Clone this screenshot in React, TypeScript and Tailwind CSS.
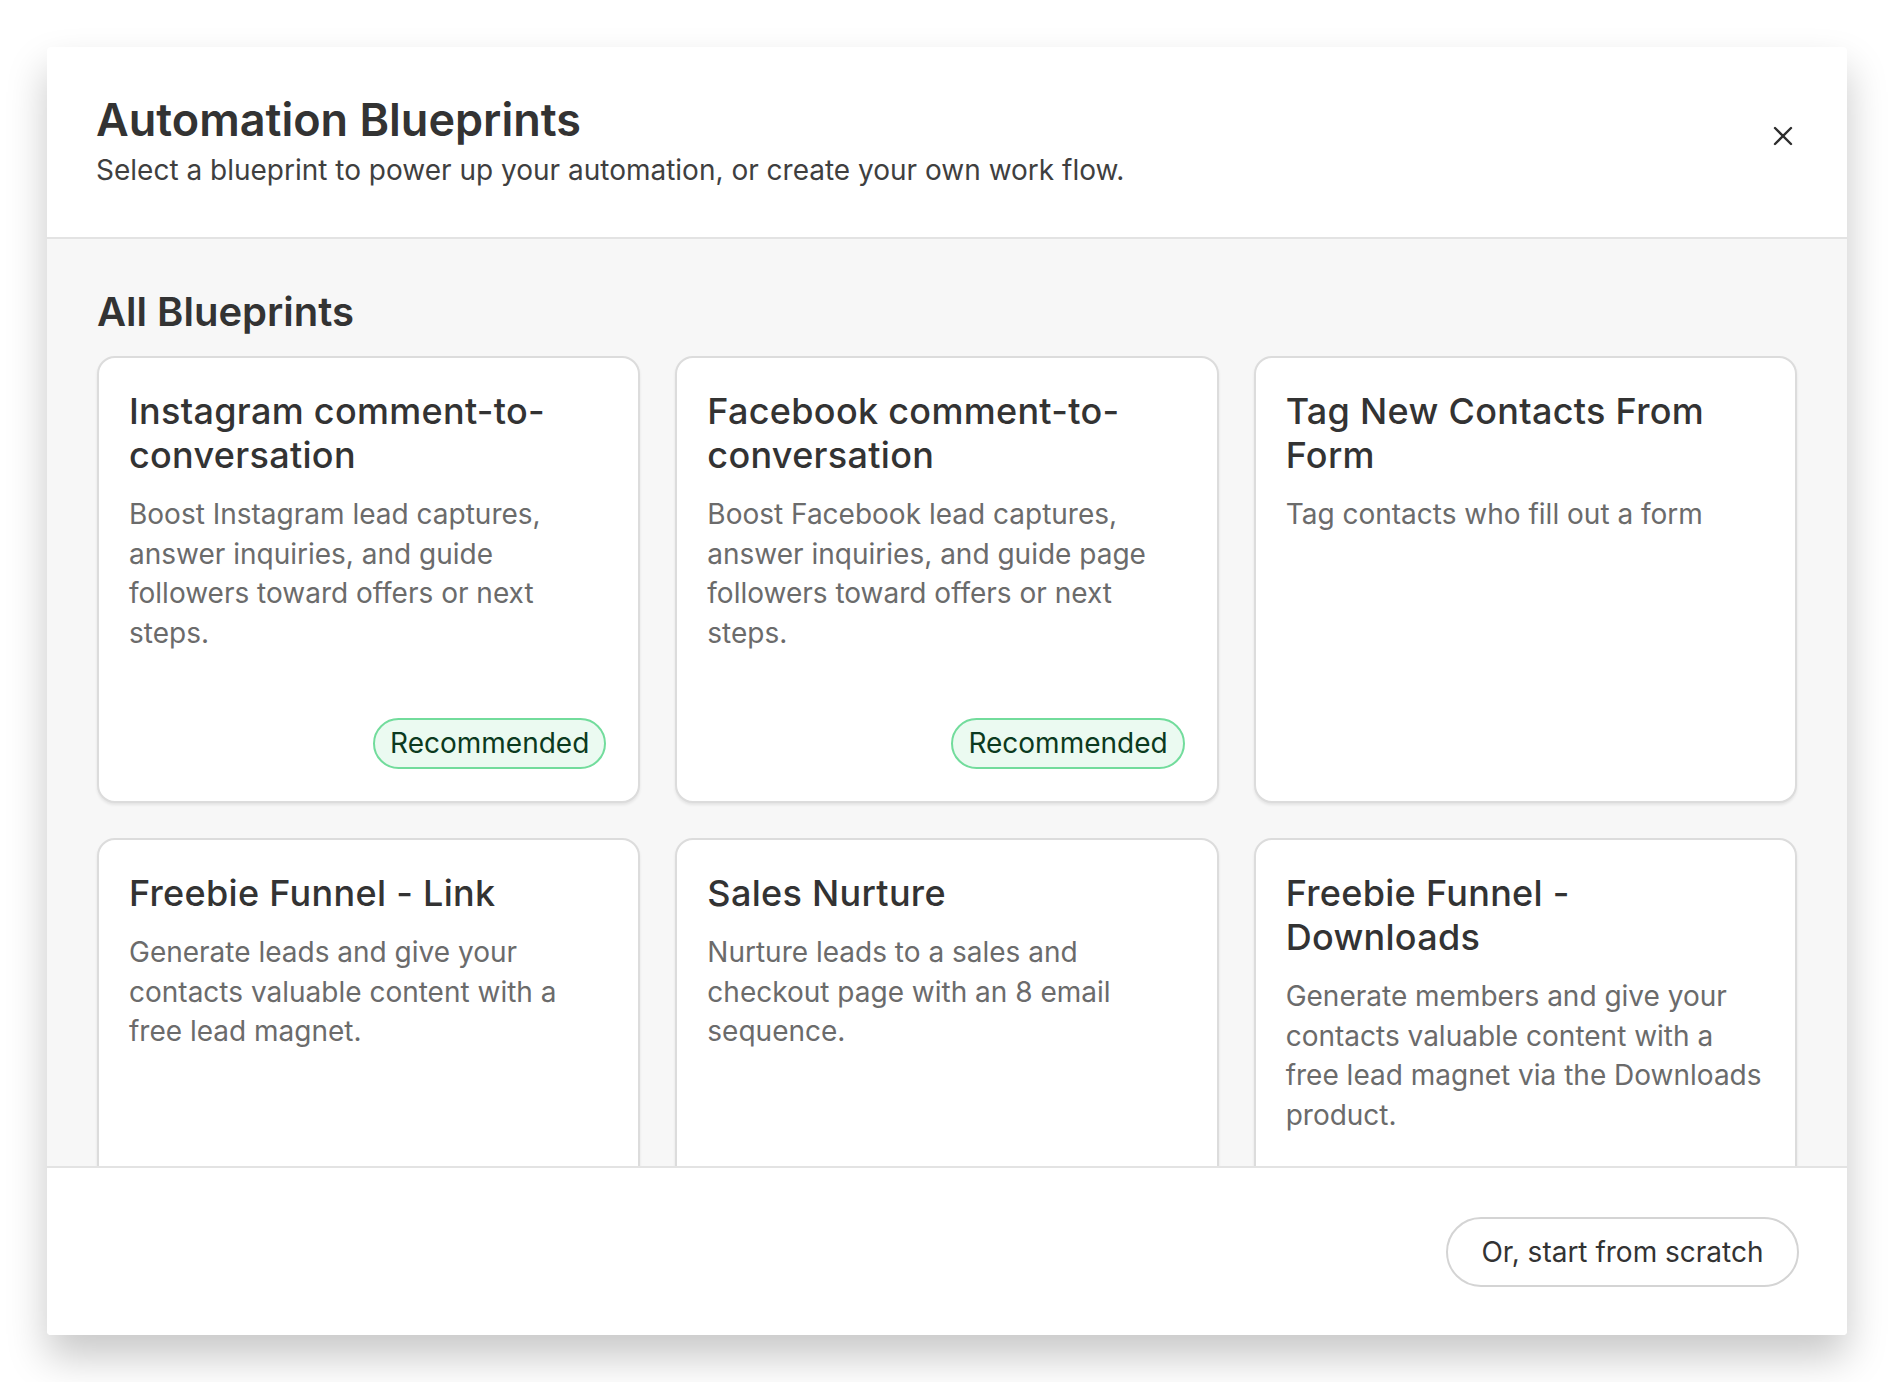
import React from "react";

type Blueprint = {
  title: string;
  description: string;
  recommended?: boolean;
};

const blueprints: Blueprint[] = [
  {
    title: "Instagram comment-to-conversation",
    description:
      "Boost Instagram lead captures, answer inquiries, and guide followers toward offers or next steps.",
    recommended: true,
  },
  {
    title: "Facebook comment-to-conversation",
    description:
      "Boost Facebook lead captures, answer inquiries, and guide page followers toward offers or next steps.",
    recommended: true,
  },
  {
    title: "Tag New Contacts From Form",
    description: "Tag contacts who fill out a form",
  },
  {
    title: "Freebie Funnel - Link",
    description:
      "Generate leads and give your contacts valuable content with a free lead magnet.",
  },
  {
    title: "Sales Nurture",
    description:
      "Nurture leads to a sales and checkout page with an 8 email sequence.",
  },
  {
    title: "Freebie Funnel - Downloads",
    description:
      "Generate members and give your contacts valuable content with a free lead magnet via the Downloads product.",
  },
];

function BlueprintCard({ title, description, recommended }: Blueprint) {
  return (
    <div className="flex h-[447px] flex-col rounded-[18px] border-2 border-[#dcdcdc] bg-white pt-[31px] pr-[24px] pb-[32px] pl-[30px] shadow-[0_2px_3px_rgba(0,0,0,0.08)]">
      <h3 className="text-[36px] font-medium leading-[44px] tracking-[0.3px] text-[#333333]">
        {title}
      </h3>
      <p className="mt-[18px] text-[28px] leading-[39.5px] text-[#6b6b6b]">
        {description}
      </p>
      {recommended && (
        <span className="mt-auto mr-[8px] self-end rounded-full border-2 border-[#72dc9c] bg-[#ebfaf1] px-[15px] py-[4px] text-[28px] leading-[39px] text-[#0b3a20]">
          Recommended
        </span>
      )}
    </div>
  );
}

export default function App() {
  return (
    <div className="min-h-screen bg-white p-[47px] font-['Inter',sans-serif]">
      <div className="flex h-[1288px] w-[1800px] flex-col overflow-hidden rounded-[4px] bg-white shadow-[0_22px_40px_rgba(0,0,0,0.22)]">
        {/* header */}
        <div className="flex h-[192px] shrink-0 items-start justify-between border-b-2 border-[#e3e3e3] pt-[48px] pr-[52px] pl-[49px]">
          <div>
            <h1 className="text-[45px] font-semibold leading-[50px] text-[#333333]">
              Automation Blueprints
            </h1>
            <p className="mt-[7px] text-[28px] leading-[36px] text-[#3f3f3f]">
              Select a blueprint to power up your automation, or create your own work flow.
            </p>
          </div>
          <button className="mt-[29px] text-[#2e2e2e]">
            <svg width="24" height="24" viewBox="0 0 24 24" fill="none" stroke="currentColor" strokeWidth="2.4" strokeLinecap="round">
              <path d="M4 4L20 20M20 4L4 20" />
            </svg>
          </button>
        </div>

        {/* body */}
        <div className="flex-1 overflow-hidden bg-[#f7f7f7] px-[50px] pt-[50px]">
          <h2 className="mb-[21px] text-[40px] font-semibold leading-[46px] text-[#333333]">
            All Blueprints
          </h2>
          <div className="grid grid-cols-3 gap-[35px]">
            {blueprints.map((b) => (
              <BlueprintCard key={b.title} {...b} />
            ))}
          </div>
        </div>

        {/* footer */}
        <div className="flex h-[169px] shrink-0 items-center justify-end border-t-2 border-[#e3e3e3] bg-white pr-[48px]">
          <button className="h-[70px] w-[353px] rounded-full border-2 border-[#d4d4d4] text-[28px] text-[#333333]">
            Or, start from scratch
          </button>
        </div>
      </div>
    </div>
  );
}
